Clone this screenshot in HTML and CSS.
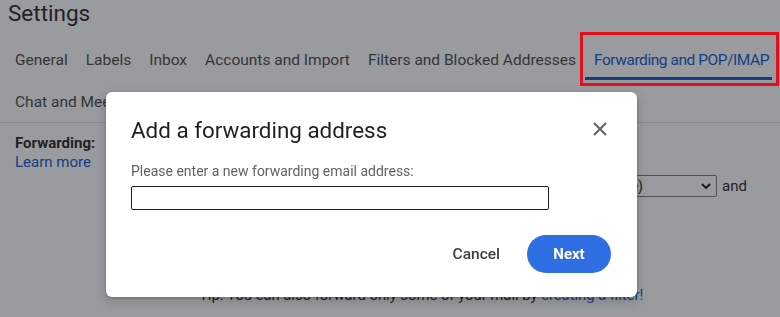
FILE: index.html
```html
<!DOCTYPE html>
<html lang="en">
<head>
<meta charset="utf-8">
<title>Settings</title>
<link rel="stylesheet" href="styles.css">
</head>
<body>
<div class="page">
  <h1 class="title">Settings</h1>
  <nav class="tabs">
    <a class="tab">General</a>
    <a class="tab">Labels</a>
    <a class="tab">Inbox</a>
    <a class="tab">Accounts and Import</a>
    <a class="tab">Filters and Blocked Addresses</a>
    <a class="tab active">Forwarding and POP/IMAP</a>
    <a class="tab">Chat and Meet</a>
  </nav>
  <section class="section">
    <div class="section-label">
      <div class="label-strong">Forwarding:</div>
      <a class="link">Learn more</a>
    </div>
    <div class="section-body">
      <div class="fwd-row">
        <div class="fwd-main">
          <span class="fwd-text">Forward a copy of incoming mail to</span>
          <div class="select">
            <span>forward@example.com (in use)</span>
            <svg class="chev" viewBox="0 0 10 6" width="10" height="6"><path d="M1 1l4 4 4-4" fill="none" stroke="#111" stroke-width="1.8"/></svg>
          </div>
        </div>
        <span class="and">and</span>
      </div>
      <p class="tip">Tip: You can also forward only some of your mail by <a class="link">creating a filter!</a></p>
    </div>
  </section>
</div>

<div class="scrim"></div>

<div class="dialog" role="dialog">
  <div class="dialog-head">
    <h2 class="dialog-title">Add a forwarding address</h2>
    <button class="close" aria-label="Close">
      <svg viewBox="0 0 14 14" width="14" height="14"><path d="M1 1L13 13M13 1L1 13" stroke="#5f6368" stroke-width="2" fill="none"/></svg>
    </button>
  </div>
  <label class="field-label">Please enter a new forwarding email address:</label>
  <input class="field" type="text">
  <div class="actions">
    <button class="btn-text">Cancel</button>
    <button class="btn-primary">Next</button>
  </div>
</div>

<div class="highlight"></div>
</body>
</html>
```
FILE: styles.css
```css
* { box-sizing: border-box; }

html, body {
  margin: 0;
  padding: 0;
  background: #ffffff;
  width: 780px;
  height: 317px;
  overflow: hidden;
}

body {
  font-family: Roboto, "Liberation Sans", sans-serif;
  color: #202124;
  position: relative;
}

.title {
  margin: 0;
  padding-left: 8px;
  font-size: 22.5px;
  line-height: 26px;
  font-weight: 400;
  color: #1f1f1f;
}

.tabs {
  display: flex;
  flex-wrap: wrap;
  column-gap: 18px;
  padding: 12px 0 0 15px;
  border-bottom: 1px solid #e0e0e0;
}

.tab {
  font-size: 15.5px;
  line-height: 20px;
  padding: 12px 0 7px;
  border-bottom: 3px solid transparent;
  color: #444746;
  white-space: nowrap;
}

.tab.active {
  color: #0b57d0;
  border-bottom-color: #0b57d0;
  margin: 0 -3px 0 -9px;
  padding-left: 9px;
  padding-right: 3px;
  letter-spacing: -0.45px;
}

.section {
  display: grid;
  grid-template-columns: 184px 1fr;
  padding: 11px 0 0 15px;
}

.section-label {
  font-size: 15px;
  line-height: 19px;
}

.label-strong {
  font-weight: 700;
  color: #1f1f1f;
}

.link {
  color: #0b57d0;
}

.section-body {
  font-size: 14px;
}

.fwd-row {
  display: flex;
  align-items: center;
  gap: 5px;
  margin-top: 41px;
}

.fwd-main {
  width: 518px;
  display: flex;
  align-items: center;
  justify-content: space-between;
}

.fwd-text {
  font-size: 14px;
}

.select {
  width: 280px;
  height: 22px;
  border: 1px solid #767676;
  border-radius: 2px;
  display: flex;
  align-items: center;
  justify-content: flex-end;
  gap: 58px;
  padding-right: 5px;
  font-size: 14px;
  white-space: nowrap;
  overflow: hidden;
}

.and {
  font-size: 15px;
  color: #1f1f1f;
}

.tip {
  margin: 88px 0 0;
  font-size: 14.8px;
  line-height: 20px;
  color: #1f1f1f;
  white-space: nowrap;
}

.scrim {
  position: fixed;
  inset: 0;
  background: rgba(32, 33, 40, 0.45);
}

.dialog {
  position: absolute;
  left: 106px;
  top: 92px;
  width: 531px;
  height: 205px;
  background: #ffffff;
  border-radius: 6px;
  box-shadow: 0 4px 8px 3px rgba(0,0,0,0.12), 0 1px 3px rgba(0,0,0,0.2);
  padding: 24px 25px 0 25px;
}

.dialog-head {
  display: flex;
  justify-content: space-between;
  align-items: center;
}

.dialog-title {
  margin: 0;
  font-size: 22.4px;
  line-height: 28px;
  font-weight: 400;
  color: #1f1f1f;
}

.close {
  width: 24px;
  height: 24px;
  padding: 0;
  border: 0;
  background: none;
  display: flex;
  align-items: center;
  justify-content: center;
  margin-top: -3px;
}

.field-label {
  display: block;
  margin-top: 16.5px;
  font-size: 14px;
  line-height: 20px;
  color: #5f6368;
}

.field {
  display: block;
  margin-top: 5px;
  width: 418px;
  height: 24px;
  border: 1.5px solid #1f1f1f;
  border-radius: 2px;
  padding: 0 4px;
  font: inherit;
}

.actions {
  display: flex;
  justify-content: flex-end;
  align-items: center;
  gap: 15px;
  margin-top: 25px;
  padding-right: 1px;
}

.btn-text {
  border: 0;
  background: none;
  font-family: Roboto, "Liberation Sans", sans-serif;
  font-size: 15.5px;
  font-weight: 500;
  color: #3c4043;
  height: 38px;
  padding: 0 12px;
}

.btn-primary {
  border: 0;
  background: #2f6fe3;
  color: #ffffff;
  font-family: Roboto, "Liberation Sans", sans-serif;
  font-size: 15px;
  font-weight: 700;
  width: 84px;
  height: 38px;
  border-radius: 19px;
}

.highlight {
  position: absolute;
  left: 580px;
  top: 32px;
  width: 199px;
  height: 54px;
  border: 3px solid #e3101c;
}
```
